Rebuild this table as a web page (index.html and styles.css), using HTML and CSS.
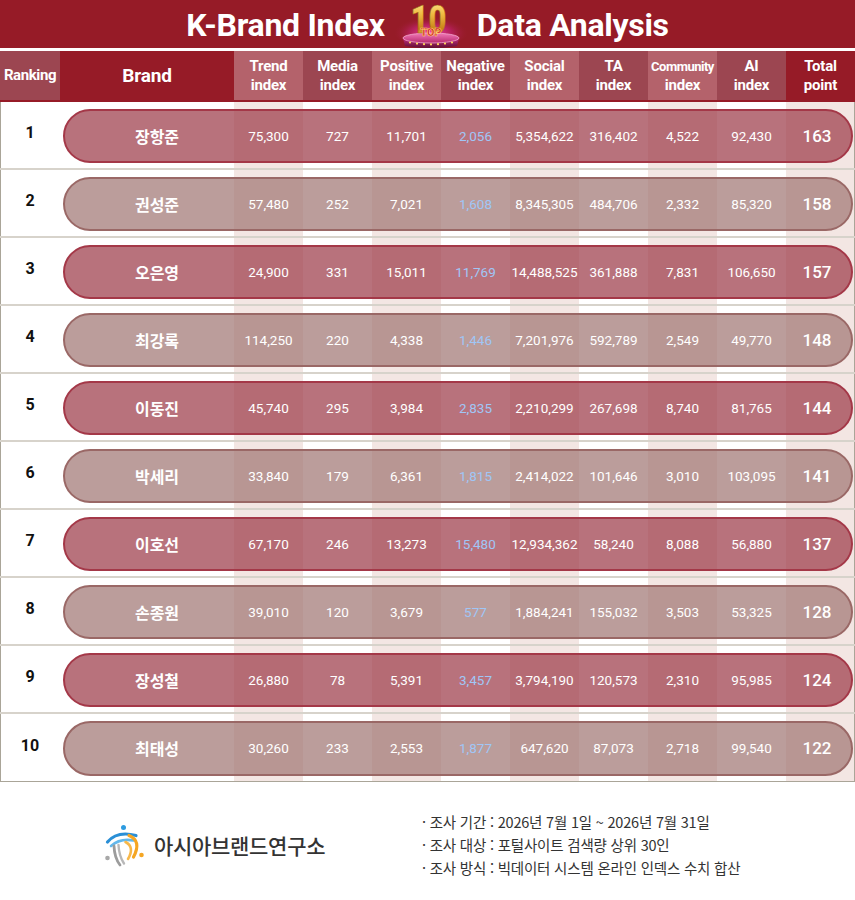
FILE: index.html
```html
<!DOCTYPE html>
<html lang="ko">
<head>
<meta charset="utf-8">
<title>K-Brand Index TOP 10 Data Analysis</title>
<link rel="stylesheet" href="styles.css">
</head>
<body>
<div class="page">
  <header class="band">
    <span class="title">K-Brand Index</span>
    <svg class="top10" width="80" height="48" viewBox="0 0 80 48" aria-hidden="true">
      <defs>
        <radialGradient id="glow" cx="0.5" cy="0.6" r="0.5">
          <stop offset="0" stop-color="#ff4fb6" stop-opacity="1"/>
          <stop offset="0.55" stop-color="#c8247a" stop-opacity="0.6"/>
          <stop offset="1" stop-color="#961b27" stop-opacity="0"/>
        </radialGradient>
        <linearGradient id="gold" x1="0" y1="0" x2="0" y2="1">
          <stop offset="0" stop-color="#fff0a0"/>
          <stop offset="0.35" stop-color="#f0bd45"/>
          <stop offset="0.7" stop-color="#c98318"/>
          <stop offset="1" stop-color="#fbe07a"/>
        </linearGradient>
        <linearGradient id="ped" x1="0" y1="0" x2="0" y2="1">
          <stop offset="0" stop-color="#c8307e"/>
          <stop offset="1" stop-color="#5e0c34"/>
        </linearGradient>
        <linearGradient id="pedtop" x1="0" y1="0" x2="0" y2="1">
          <stop offset="0" stop-color="#f27ab8"/>
          <stop offset="1" stop-color="#b8286e"/>
        </linearGradient>
      </defs>
      <ellipse cx="40" cy="30" rx="38" ry="17" fill="url(#glow)"/>
      <path d="M12 38 L14 46 Q40 50 66 46 L68 38 Z" fill="url(#ped)"/>
      <ellipse cx="40" cy="38" rx="28" ry="5" fill="url(#pedtop)" stroke="#f9b6d8" stroke-width="0.7"/>
      <g fill="#ffd35a">
        <circle cx="19" cy="42.5" r="1.1"/><circle cx="26" cy="43.6" r="1.1"/><circle cx="33" cy="44.2" r="1.1"/>
        <circle cx="40" cy="44.4" r="1.1"/><circle cx="47" cy="44.2" r="1.1"/><circle cx="54" cy="43.6" r="1.1"/>
        <circle cx="61" cy="42.5" r="1.1"/>
      </g>
      <text x="37.5" y="33" text-anchor="middle" class="ten" textLength="36" lengthAdjust="spacingAndGlyphs">10</text>
      <text x="40" y="36" text-anchor="middle" class="top" textLength="21" lengthAdjust="spacingAndGlyphs">TOP</text>
    </svg>
    <span class="title">Data Analysis</span>
  </header>

  <div class="table">
    <div class="thead">
      <div class="th h-rank">Ranking</div>
      <div class="th h-brand">Brand</div>
      <div class="th h-light">Trend<br>index</div>
      <div class="th h-dark">Media<br>index</div>
      <div class="th h-light">Positive<br>index</div>
      <div class="th h-dark">Negative<br>index</div>
      <div class="th h-light">Social<br>index</div>
      <div class="th h-dark">TA<br>index</div>
      <div class="th h-light"><span class="small">Community</span>index</div>
      <div class="th h-dark">AI<br>index</div>
      <div class="th h-total">Total<br>point</div>
    </div>

    <div class="tbody">
      <div class="row odd"><div class="pill"></div><div class="cells">
        <div class="rank">1</div><div class="brand">장항준</div>
        <div class="num">75,300</div><div class="num">727</div><div class="num">11,701</div><div class="num neg">2,056</div>
        <div class="num">5,354,622</div><div class="num">316,402</div><div class="num">4,522</div><div class="num">92,430</div><div class="total">163</div>
      </div></div>
      <div class="row even"><div class="pill"></div><div class="cells">
        <div class="rank">2</div><div class="brand">권성준</div>
        <div class="num">57,480</div><div class="num">252</div><div class="num">7,021</div><div class="num neg">1,608</div>
        <div class="num">8,345,305</div><div class="num">484,706</div><div class="num">2,332</div><div class="num">85,320</div><div class="total">158</div>
      </div></div>
      <div class="row odd"><div class="pill"></div><div class="cells">
        <div class="rank">3</div><div class="brand">오은영</div>
        <div class="num">24,900</div><div class="num">331</div><div class="num">15,011</div><div class="num neg">11,769</div>
        <div class="num">14,488,525</div><div class="num">361,888</div><div class="num">7,831</div><div class="num">106,650</div><div class="total">157</div>
      </div></div>
      <div class="row even"><div class="pill"></div><div class="cells">
        <div class="rank">4</div><div class="brand">최강록</div>
        <div class="num">114,250</div><div class="num">220</div><div class="num">4,338</div><div class="num neg">1,446</div>
        <div class="num">7,201,976</div><div class="num">592,789</div><div class="num">2,549</div><div class="num">49,770</div><div class="total">148</div>
      </div></div>
      <div class="row odd"><div class="pill"></div><div class="cells">
        <div class="rank">5</div><div class="brand">이동진</div>
        <div class="num">45,740</div><div class="num">295</div><div class="num">3,984</div><div class="num neg">2,835</div>
        <div class="num">2,210,299</div><div class="num">267,698</div><div class="num">8,740</div><div class="num">81,765</div><div class="total">144</div>
      </div></div>
      <div class="row even"><div class="pill"></div><div class="cells">
        <div class="rank">6</div><div class="brand">박세리</div>
        <div class="num">33,840</div><div class="num">179</div><div class="num">6,361</div><div class="num neg">1,815</div>
        <div class="num">2,414,022</div><div class="num">101,646</div><div class="num">3,010</div><div class="num">103,095</div><div class="total">141</div>
      </div></div>
      <div class="row odd"><div class="pill"></div><div class="cells">
        <div class="rank">7</div><div class="brand">이호선</div>
        <div class="num">67,170</div><div class="num">246</div><div class="num">13,273</div><div class="num neg">15,480</div>
        <div class="num">12,934,362</div><div class="num">58,240</div><div class="num">8,088</div><div class="num">56,880</div><div class="total">137</div>
      </div></div>
      <div class="row even"><div class="pill"></div><div class="cells">
        <div class="rank">8</div><div class="brand">손종원</div>
        <div class="num">39,010</div><div class="num">120</div><div class="num">3,679</div><div class="num neg">577</div>
        <div class="num">1,884,241</div><div class="num">155,032</div><div class="num">3,503</div><div class="num">53,325</div><div class="total">128</div>
      </div></div>
      <div class="row odd"><div class="pill"></div><div class="cells">
        <div class="rank">9</div><div class="brand">장성철</div>
        <div class="num">26,880</div><div class="num">78</div><div class="num">5,391</div><div class="num neg">3,457</div>
        <div class="num">3,794,190</div><div class="num">120,573</div><div class="num">2,310</div><div class="num">95,985</div><div class="total">124</div>
      </div></div>
      <div class="row even last"><div class="pill"></div><div class="cells">
        <div class="rank">10</div><div class="brand">최태성</div>
        <div class="num">30,260</div><div class="num">233</div><div class="num">2,553</div><div class="num neg">1,877</div>
        <div class="num">647,620</div><div class="num">87,073</div><div class="num">2,718</div><div class="num">99,540</div><div class="total">122</div>
      </div></div>
    </div>
  </div>

  <footer class="footer">
    <div class="org">
      <svg class="org-icon" width="44" height="44" viewBox="8 8 44 44" aria-hidden="true">
        <circle cx="28.5" cy="12.5" r="2.5" fill="#2d9be0"/>
        <path d="M12.5 27 Q22 15.5 41 20.5" fill="none" stroke="#2a8fd6" stroke-width="3.2" stroke-linecap="round"/>
        <path d="M16 31 Q25 23 38.5 25.5" fill="none" stroke="#62b8ec" stroke-width="2.6" stroke-linecap="round"/>
        <path d="M19 31 Q19.5 43 25 50" fill="none" stroke="#9c9c9c" stroke-width="2.8" stroke-linecap="round"/>
        <path d="M23.5 30 Q24 41 29 48.5" fill="none" stroke="#b8b8b8" stroke-width="2.4" stroke-linecap="round"/>
        <circle cx="12.5" cy="43" r="2.3" fill="#a8a8a8"/>
        <path d="M34 20.5 Q47 26 38.5 42" fill="none" stroke="#f5a623" stroke-width="3.2" stroke-linecap="round"/>
        <path d="M30.5 27 Q40 32 33 44" fill="none" stroke="#f7b84a" stroke-width="2.6" stroke-linecap="round"/>
        <circle cx="46.5" cy="40" r="2.3" fill="#f5a623"/>
      </svg>
      <span class="org-name">아시아브랜드연구소</span>
    </div>
    <ul class="notes">
      <li>· 조사 기간 : 2026년 7월 1일 ~ 2026년 7월 31일</li>
      <li>· 조사 대상 : 포털사이트 검색량 상위 30인</li>
      <li>· 조사 방식 : 빅데이터 시스템 온라인 인덱스 수치 합산</li>
    </ul>
  </footer>
</div>
</body>
</html>
```

FILE: styles.css
```css
* { box-sizing: border-box; }

html, body {
  margin: 0;
  padding: 0;
  background: #ffffff;
}

body {
  font-family: Roboto, "Noto Sans CJK KR", sans-serif;
  color: #222;
}

.page {
  width: 855px;
}

/* ---------- title band ---------- */
.band {
  height: 48px;
  background: #961b27;
  display: flex;
  align-items: center;
  justify-content: center;
  gap: 6px;
}

.title {
  color: #fff;
  font-weight: 700;
  font-size: 32px;
  letter-spacing: -0.3px;
  line-height: 1;
  padding-top: 2px;
}

.top10 {
  display: block;
  align-self: flex-end;
  overflow: visible;
}

.top10 .ten {
  font-family: Roboto, sans-serif;
  font-weight: 900;
  font-size: 38px;
  fill: url(#gold);
  stroke: #9a6210;
  stroke-width: 0.5px;
}

.top10 .top {
  font-family: Roboto, sans-serif;
  font-weight: 900;
  font-size: 10px;
  fill: #c8102e;
  stroke: #ffd86a;
  stroke-width: 0.6px;
}

/* ---------- table ---------- */
.table {
  margin-top: 3px;
}

.thead {
  display: grid;
  grid-template-columns: 60px 174px repeat(9, 69px);
  height: 51px;
  border-bottom: 2px solid #961b27;
}

.th {
  display: flex;
  flex-direction: column;
  align-items: center;
  justify-content: center;
  text-align: center;
  color: #fff;
  font-weight: 700;
  font-size: 15px;
  line-height: 19px;
  letter-spacing: -0.2px;
}

.th .small {
  font-size: 13px;
  letter-spacing: -0.5px;
  line-height: 19px;
}

.h-rank { background: #9c4651; letter-spacing: -0.4px; }
.h-brand { background: #961b27; font-size: 19px; }
.h-light { background: #b4626b; }
.h-dark { background: #9c4651; }
.h-total { background: #961b27; }

.tbody {
  background: linear-gradient(to right,
    #ffffff 0 234px,
    #f3e6e3 234px 303px,
    #ffffff 303px 372px,
    #f3e6e3 372px 441px,
    #ffffff 441px 510px,
    #f3e6e3 510px 579px,
    #ffffff 579px 648px,
    #f3e6e3 648px 717px,
    #ffffff 717px 786px,
    #f3e6e3 786px 855px);
  box-shadow: inset 1px 0 #aaa598, inset -1px 0 #aaa598;
}

.row {
  display: grid;
  grid-template: 66px / 1fr;
  border-bottom: 2px solid #d7d3cb;
}

.row.last {
  border-bottom: 1px solid #aaa598;
  grid-template: 67px / 1fr;
}

.pill {
  grid-area: 1 / 1;
  margin: 7px 2px 5px 63px;
  border-radius: 28px;
  border: 2px solid;
}

.odd .pill {
  background: rgba(154, 54, 68, 0.7);
  border-color: #a43848;
}

.even .pill {
  background: rgba(158, 116, 112, 0.7);
  border-color: #9a6866;
}

.cells {
  grid-area: 1 / 1;
  position: relative;
  display: grid;
  grid-template-columns: 60px 174px repeat(9, 69px);
  align-items: center;
  padding-top: 1px;
}

.cells > div {
  text-align: center;
  white-space: nowrap;
}

.rank {
  font-weight: 700;
  font-size: 16px;
  color: #111;
  padding-bottom: 6px;
}

.brand {
  color: #fff;
  font-weight: 700;
  font-size: 16px;
  padding-left: 20px;
}

.num {
  color: #fff;
  font-size: 13.5px;
}

.num.neg {
  color: #a0c6f6;
}

.total {
  color: #fff;
  font-size: 17px;
  font-weight: 500;
  padding-right: 7px;
}

/* ---------- footer ---------- */
.footer {
  display: flex;
  align-items: center;
  padding: 28px 0 0 103px;
}

.org {
  width: 319px;
  display: flex;
  align-items: center;
  gap: 7px;
}

.org-icon {
  display: block;
}

.org-name {
  font-family: "Noto Sans CJK KR", sans-serif;
  font-size: 21px;
  font-weight: 500;
  color: #333;
  letter-spacing: -0.3px;
}

.notes {
  list-style: none;
  margin: 0;
  padding: 0;
  font-family: "Noto Sans CJK KR", sans-serif;
  font-size: 14.5px;
  line-height: 23px;
  color: #333;
  letter-spacing: -0.2px;
}
```
